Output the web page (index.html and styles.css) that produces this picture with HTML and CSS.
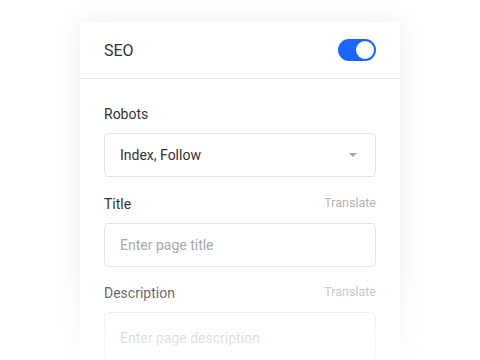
FILE: index.html
```html
<!DOCTYPE html>
<html lang="en">
<head>
  <meta charset="UTF-8" />
  <meta name="viewport" content="width=device-width, initial-scale=1.0"/>
  <title>SEO settings</title>
  <link rel="stylesheet" href="styles.css">
</head>
<body>
  <div class="panel">
    <div class="panel-head">
      <span class="panel-title">SEO</span>
      <span class="toggle on"><span class="knob"></span></span>
    </div>

    <div class="panel-body">
      <div class="field">
        <div class="field-label">
          <span>Robots</span>
        </div>
        <div class="box select">
          <span>Index, Follow</span>
          <span class="caret"></span>
        </div>
      </div>

      <div class="field">
        <div class="field-label">
          <span>Title</span>
          <span class="translate">Translate</span>
        </div>
        <div class="box placeholder">Enter page title</div>
      </div>

      <div class="field">
        <div class="field-label">
          <span>Description</span>
          <span class="translate">Translate</span>
        </div>
        <div class="box textarea placeholder">Enter page description</div>
      </div>
    </div>
  </div>

  <div class="fade"></div>
</body>
</html>
```

FILE: styles.css
```css
html, body {
  height: 360px;
  overflow: hidden;
}

body {
  margin: 0;
  background: #fff;
  font-family: Roboto, "Noto Sans", sans-serif;
  color: #333;
}

.panel {
  width: 320px;
  height: 338px;
  margin: 22px auto 0;
  background: #fff;
  border-radius: 4px 4px 0 0;
  box-shadow: 0 0 24px rgba(0, 0, 0, 0.07);
  overflow: hidden;
}

.panel-head {
  display: flex;
  align-items: center;
  justify-content: space-between;
  height: 56px;
  padding: 0 24px;
  border-bottom: 1px solid #e6e6e8;
}

.panel-title {
  font-size: 16px;
  color: #333;
}

.toggle {
  width: 38px;
  height: 22px;
  border-radius: 11px;
  background: #1a66ff;
  display: flex;
  align-items: center;
  justify-content: flex-end;
  padding: 0 2px;
  box-sizing: border-box;
}

.knob {
  width: 18px;
  height: 18px;
  border-radius: 50%;
  background: #fff;
}

.panel-body {
  padding: 25px 24px 0;
}

.field {
  margin-bottom: 16.5px;
}

.field-label {
  display: flex;
  justify-content: space-between;
  align-items: center;
  height: 20px;
  font-size: 14px;
  margin-bottom: 9px;
}

.translate {
  font-size: 12.5px;
  color: #b3b3ba;
  margin-top: -3px;
}

.box {
  height: 44px;
  box-sizing: border-box;
  border: 1px solid #e4e4e8;
  border-radius: 4px;
  padding: 0 15px;
  display: flex;
  align-items: center;
  font-size: 14px;
}

.select {
  justify-content: space-between;
  color: #333;
}

.caret {
  width: 0;
  height: 0;
  border-left: 4px solid transparent;
  border-right: 4px solid transparent;
  border-top: 4px solid #a4a4ae;
  margin-right: 3px;
}

.placeholder {
  color: #a8a8b2;
}

.textarea {
  height: 70px;
  align-items: flex-start;
  padding-top: 17px;
}

.fade {
  position: absolute;
  left: 0;
  right: 0;
  top: 260px;
  height: 100px;
  background: linear-gradient(to bottom, rgba(255, 255, 255, 0), rgba(255, 255, 255, 0.8));
  pointer-events: none;
}
```
